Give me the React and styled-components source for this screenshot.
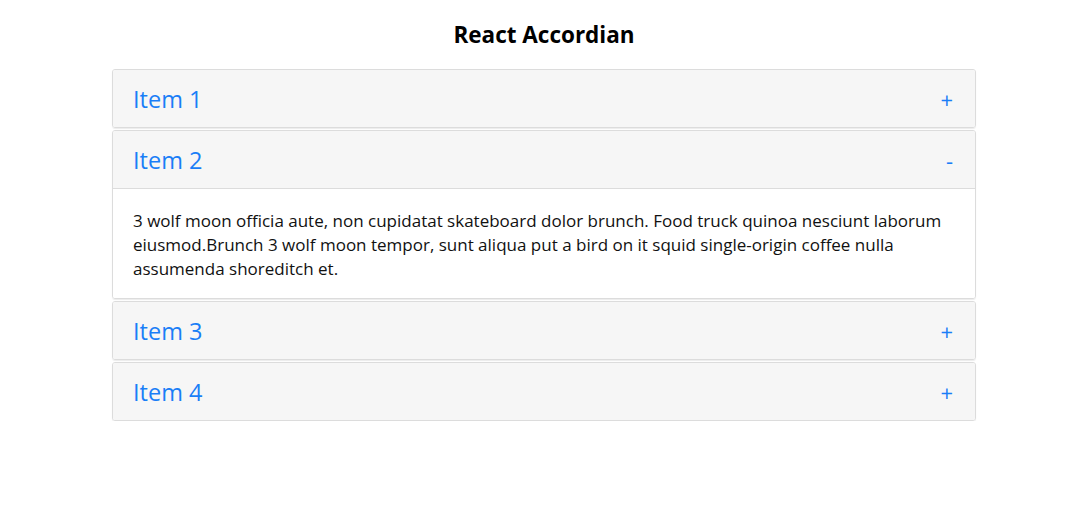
import React, { useState } from "react";
import styled, { createGlobalStyle } from "styled-components";

const GlobalStyle = createGlobalStyle`
  body {
    margin: 0;
    font-family: "Open Sans", "Noto Sans", sans-serif;
    background: #fff;
  }
`;

const items = [
  {
    title: "Item 1",
    text: "3 wolf moon officia aute, non cupidatat skateboard dolor brunch. Food truck quinoa nesciunt laborum eiusmod.Brunch 3 wolf moon tempor, sunt aliqua put a bird on it squid single-origin coffee nulla assumenda shoreditch et.",
  },
  {
    title: "Item 2",
    text: "3 wolf moon officia aute, non cupidatat skateboard dolor brunch. Food truck quinoa nesciunt laborum eiusmod.Brunch 3 wolf moon tempor, sunt aliqua put a bird on it squid single-origin coffee nulla assumenda shoreditch et.",
  },
  {
    title: "Item 3",
    text: "3 wolf moon officia aute, non cupidatat skateboard dolor brunch. Food truck quinoa nesciunt laborum eiusmod.",
  },
  {
    title: "Item 4",
    text: "3 wolf moon officia aute, non cupidatat skateboard dolor brunch. Food truck quinoa nesciunt laborum eiusmod.",
  },
];

export default function App() {
  const [open, setOpen] = useState(1);

  return (
    <>
      <GlobalStyle />
      <Page>
        <Title>React Accordian</Title>
        <List>
          {items.map((item, i) => (
            <Item key={item.title}>
              <Header onClick={() => setOpen(open === i ? -1 : i)}>
                <ItemTitle>{item.title}</ItemTitle>
                <Sign>{open === i ? "-" : "+"}</Sign>
              </Header>
              {open === i && <Body>{item.text}</Body>}
            </Item>
          ))}
        </List>
      </Page>
    </>
  );
}

const Page = styled.div`
  padding: 20px 99px 0 112px;
`;

const Title = styled.h1`
  margin: 0 0 19px;
  text-align: center;
  font-size: 22.5px;
  line-height: 30px;
  font-weight: 700;
  color: #000;
`;

const List = styled.div`
  display: flex;
  flex-direction: column;
  gap: 2px;
  width: 864px;
`;

const Item = styled.div`
  border: 1px solid #dcdcdc;
  border-radius: 3px;
  box-shadow: 0 1px 1px rgba(0, 0, 0, 0.08);
  overflow: hidden;
`;

const Header = styled.div`
  display: flex;
  justify-content: space-between;
  align-items: center;
  height: 57px;
  padding: 0 20px;
  background: #f6f6f6;
  cursor: pointer;
`;

const ItemTitle = styled.span`
  font-size: 23.5px;
  color: #1a7ef7;
`;

const Sign = styled.span`
  font-size: 22px;
  color: #1a7ef7;
  padding-right: 2px;
`;

const Body = styled.div`
  padding: 20px 20px 17px;
  border-top: 1px solid #dcdcdc;
  background: #fff;
  font-size: 17px;
  line-height: 24px;
  color: #111;
`;
